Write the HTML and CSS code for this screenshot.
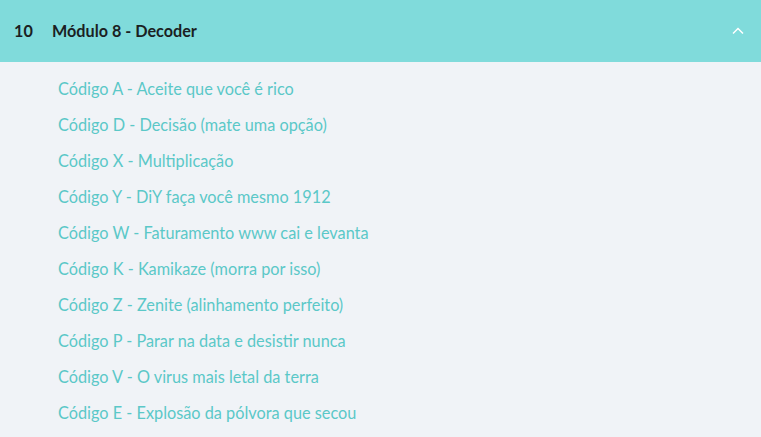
FILE: index.html
```html
<!DOCTYPE html>
<html lang="pt-BR">

<head>
    <meta charset="UTF-8">
    <meta name="viewport" content="width=device-width, initial-scale=1.0">
    <title>Módulo 8 - Decoder</title>
    <link rel="stylesheet" href="styles.css">
</head>

<body>
    <section class="module">
        <div class="module-header">
            <span class="module-number">10</span>
            <span class="module-title">Módulo 8 - Decoder</span>
            <svg class="chevron" width="12" height="8" viewBox="0 0 12 8">
                <path d="M1 6.5 L6 1.5 L11 6.5" fill="none" stroke="#ffffff" stroke-width="1.5" />
            </svg>
        </div>

        <ul class="lessons">
            <li><a href="#">Código A - Aceite que você é rico</a></li>
            <li><a href="#">Código D - Decisão (mate uma opção)</a></li>
            <li><a href="#">Código X - Multiplicação</a></li>
            <li><a href="#">Código Y - DiY faça você mesmo 1912</a></li>
            <li><a href="#">Código W - Faturamento www cai e levanta</a></li>
            <li><a href="#">Código K - Kamikaze (morra por isso)</a></li>
            <li><a href="#">Código Z - Zenite (alinhamento perfeito)</a></li>
            <li><a href="#">Código P - Parar na data e desistir nunca</a></li>
            <li><a href="#">Código V - O virus mais letal da terra</a></li>
            <li><a href="#">Código E - Explosão da pólvora que secou</a></li>
        </ul>
    </section>
</body>

</html>
```

FILE: styles.css
```css
body {
    margin: 0;
    font-family: Lato, "Open Sans", sans-serif;
    background: #f0f3f7;
}

.module-header {
    display: flex;
    align-items: center;
    height: 62px;
    padding: 0 17px 0 14px;
    background: #80dbdb;
    color: #1b1f23;
    font-size: 16.2px;
    font-weight: bold;
}

.module-number {
    width: 38px;
    margin-top: -2px;
}

.module-title {
    flex: 1;
    margin-top: -2px;
}

.chevron {
    display: block;
}

.lessons {
    list-style: none;
    margin: 0;
    padding: 9px 0 0 58px;
}

.lessons li {
    height: 36px;
    line-height: 36px;
}

.lessons a {
    color: #5bc8c8;
    font-size: 16.3px;
    text-decoration: none;
}
```
